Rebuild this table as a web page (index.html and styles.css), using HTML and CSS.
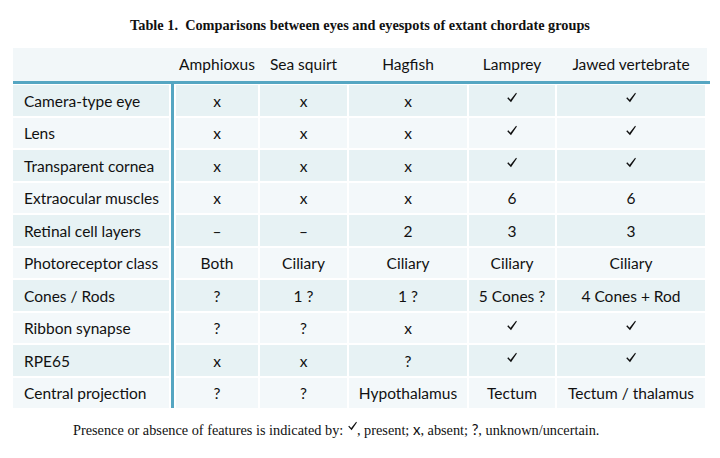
FILE: index.html
```html
<!DOCTYPE html>
<html>
<head>
<meta charset="utf-8">
<link rel="stylesheet" href="styles.css">
</head>
<body>
<h1 class="title">Table 1.&nbsp; Comparisons between eyes and eyespots of extant chordate groups</h1>
<div class="table">
  <div class="head">
    <div class="hc lead"></div>
    <div class="hc bar-slot"></div>
    <div class="hc">Amphioxus</div>
    <div class="hc">Sea squirt</div>
    <div class="hc">Hagfish</div>
    <div class="hc">Lamprey</div>
    <div class="hc">Jawed vertebrate</div>
  </div>
  <div class="rule"></div>
  <div class="body">
    <div class="vbar"></div>

    <div class="c lead d">Camera-type eye</div>
    <div class="c d">x</div><div class="c d">x</div><div class="c d">x</div>
    <div class="c d"><svg class="chk" viewBox="0 0 11 11"><path d="M0.3 6.2 L1.4 5.3 L3.9 7.9 L10 0.3 L10.9 1.1 L4.4 10.7 Z"/></svg></div>
    <div class="c d"><svg class="chk" viewBox="0 0 11 11"><path d="M0.3 6.2 L1.4 5.3 L3.9 7.9 L10 0.3 L10.9 1.1 L4.4 10.7 Z"/></svg></div>

    <div class="c lead l">Lens</div>
    <div class="c l">x</div><div class="c l">x</div><div class="c l">x</div>
    <div class="c l"><svg class="chk" viewBox="0 0 11 11"><path d="M0.3 6.2 L1.4 5.3 L3.9 7.9 L10 0.3 L10.9 1.1 L4.4 10.7 Z"/></svg></div>
    <div class="c l"><svg class="chk" viewBox="0 0 11 11"><path d="M0.3 6.2 L1.4 5.3 L3.9 7.9 L10 0.3 L10.9 1.1 L4.4 10.7 Z"/></svg></div>

    <div class="c lead d">Transparent cornea</div>
    <div class="c d">x</div><div class="c d">x</div><div class="c d">x</div>
    <div class="c d"><svg class="chk" viewBox="0 0 11 11"><path d="M0.3 6.2 L1.4 5.3 L3.9 7.9 L10 0.3 L10.9 1.1 L4.4 10.7 Z"/></svg></div>
    <div class="c d"><svg class="chk" viewBox="0 0 11 11"><path d="M0.3 6.2 L1.4 5.3 L3.9 7.9 L10 0.3 L10.9 1.1 L4.4 10.7 Z"/></svg></div>

    <div class="c lead l">Extraocular muscles</div>
    <div class="c l">x</div><div class="c l">x</div><div class="c l">x</div>
    <div class="c l">6</div><div class="c l">6</div>

    <div class="c lead d">Retinal cell layers</div>
    <div class="c d">–</div><div class="c d">–</div><div class="c d">2</div>
    <div class="c d">3</div><div class="c d">3</div>

    <div class="c lead l">Photoreceptor class</div>
    <div class="c l">Both</div><div class="c l">Ciliary</div><div class="c l">Ciliary</div>
    <div class="c l">Ciliary</div><div class="c l">Ciliary</div>

    <div class="c lead d">Cones / Rods</div>
    <div class="c d">?</div><div class="c d">1 ?</div><div class="c d">1 ?</div>
    <div class="c d">5 Cones ?</div><div class="c d">4 Cones + Rod</div>

    <div class="c lead l">Ribbon synapse</div>
    <div class="c l">?</div><div class="c l">?</div><div class="c l">x</div>
    <div class="c l"><svg class="chk" viewBox="0 0 11 11"><path d="M0.3 6.2 L1.4 5.3 L3.9 7.9 L10 0.3 L10.9 1.1 L4.4 10.7 Z"/></svg></div>
    <div class="c l"><svg class="chk" viewBox="0 0 11 11"><path d="M0.3 6.2 L1.4 5.3 L3.9 7.9 L10 0.3 L10.9 1.1 L4.4 10.7 Z"/></svg></div>

    <div class="c lead d">RPE65</div>
    <div class="c d">x</div><div class="c d">x</div><div class="c d">?</div>
    <div class="c d"><svg class="chk" viewBox="0 0 11 11"><path d="M0.3 6.2 L1.4 5.3 L3.9 7.9 L10 0.3 L10.9 1.1 L4.4 10.7 Z"/></svg></div>
    <div class="c d"><svg class="chk" viewBox="0 0 11 11"><path d="M0.3 6.2 L1.4 5.3 L3.9 7.9 L10 0.3 L10.9 1.1 L4.4 10.7 Z"/></svg></div>

    <div class="c lead l">Central projection</div>
    <div class="c l">?</div><div class="c l">?</div><div class="c l">Hypothalamus</div>
    <div class="c l">Tectum</div><div class="c l">Tectum / thalamus</div>
  </div>
</div>
<p class="note">Presence or absence of features is indicated by: <svg class="chk small" viewBox="0 0 11 11"><path d="M0.3 6.2 L1.4 5.3 L3.9 7.9 L10 0.3 L10.9 1.1 L4.4 10.7 Z"/></svg>, present; <span class="sym">x</span>, absent; <span class="sym">?</span>, unknown/uncertain.</p>
</body>
</html>
```
FILE: styles.css
```css
* { box-sizing: border-box; }
html, body { margin: 0; padding: 0; background: #ffffff; }
body { width: 720px; height: 458px; overflow: hidden; color: #111; }

.title {
  margin: 0;
  padding-top: 16px;
  height: 48px;
  text-align: center;
  font-family: "Liberation Serif", "Times New Roman", serif;
  font-weight: bold;
  font-size: 14.3px;
  line-height: 18px;
  color: #111;
}

.table {
  margin-left: 13px;
  font-family: Lato, "Open Sans", sans-serif;
  font-size: 15.5px;
  color: #111;
}

.head, .body {
  display: grid;
  grid-template-columns: 156px 3px 82px 87px 118px 86px 148px;
  column-gap: 2px;
}

.head {
  width: 694px;
  height: 33px;
  background: #f2f7f9;
}
.hc {
  display: flex;
  align-items: center;
  justify-content: center;
  padding-bottom: 2px;
}

.rule {
  width: 697px;
  height: 3px;
  background: #55a6c2;
}

.body {
  width: 692px;
  margin-top: 1px;
  row-gap: 2px;
  grid-auto-rows: 30.5px;
}
.vbar {
  grid-column: 2;
  grid-row: 1 / span 10;
  background: #55a6c2;
  margin-top: -1px;
}
.c {
  display: flex;
  align-items: center;
  justify-content: center;
  padding-top: 1px;
}
.c.lead { grid-column: 1; justify-content: flex-start; padding-left: 11px; }
.d { background: #e7f2f4; }
.l { background: #f3f8fa; }

.chk {
  width: 10px;
  height: 11px;
  fill: #111;
  margin-top: -6px;
}

.note {
  margin: 12px 0 0 73px;
  font-family: "Liberation Serif", "Times New Roman", serif;
  font-size: 14.3px;
  line-height: 18px;
  color: #111;
}
.chk.small { width: 9px; height: 10px; margin: 0 0 0 1px; vertical-align: 4px; }
.sym { font-family: Lato, "Open Sans", sans-serif; font-size: 15px; }
```
